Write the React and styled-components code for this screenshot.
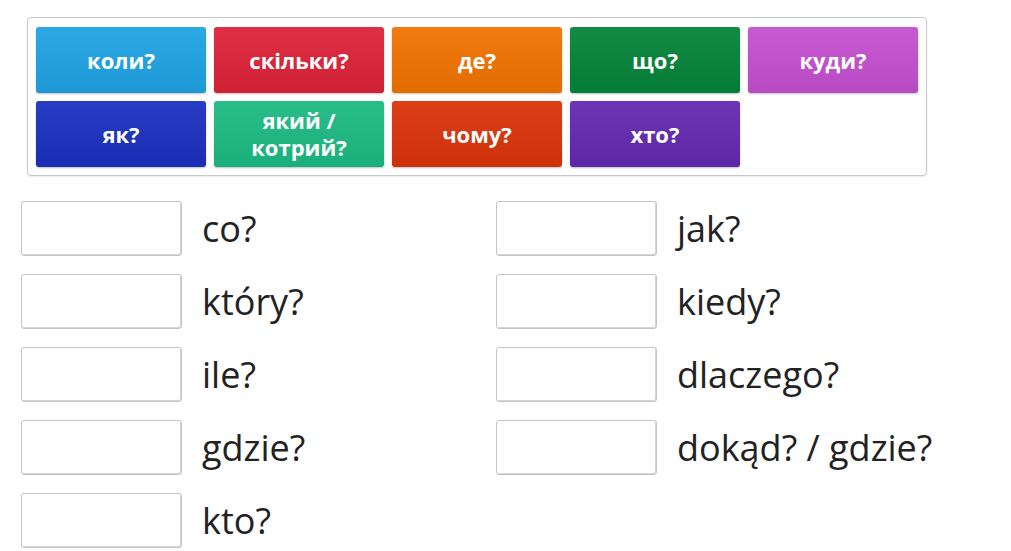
import styled, { createGlobalStyle } from "styled-components";

const GlobalStyle = createGlobalStyle`
    body {
        margin: 0;
        background: #fff;
        font-family: "Open Sans", "Noto Sans", sans-serif;
    }
`;

const tiles = [
    { text: "коли?", color: "#1ea3e3" },
    { text: "скільки?", color: "#dc2238" },
    { text: "де?", color: "#f07300" },
    { text: "що?", color: "#058338" },
    { text: "куди?", color: "#c44fd0" },
    { text: "як?", color: "#1b30c0" },
    { text: "який / котрий?", color: "#1cba82" },
    { text: "чому?", color: "#db330a" },
    { text: "хто?", color: "#6229b1" },
];

const leftWords = ["co?", "który?", "ile?", "gdzie?", "kto?"];
const rightWords = ["jak?", "kiedy?", "dlaczego?", "dokąd? / gdzie?"];

const App = () => {
    return (
        <>
            <GlobalStyle />
            <PageDiv>
                <TilePanel>
                    {tiles.map((t) => (
                        <Tile key={t.text} $color={t.color}>{t.text}</Tile>
                    ))}
                </TilePanel>
                <AnswerGrid>
                    <AnswerColumn>
                        {leftWords.map((w) => (
                            <AnswerRow key={w}>
                                <DropBox />
                                <WordLabel>{w}</WordLabel>
                            </AnswerRow>
                        ))}
                    </AnswerColumn>
                    <AnswerColumn>
                        {rightWords.map((w) => (
                            <AnswerRow key={w}>
                                <DropBox />
                                <WordLabel>{w}</WordLabel>
                            </AnswerRow>
                        ))}
                    </AnswerColumn>
                </AnswerGrid>
            </PageDiv>
        </>
    );
};

export default App;

const PageDiv = styled.div`
    padding: 17px 0 0 21px;
`;

const TilePanel = styled.div`
    margin-left: 6px;
    width: 882px;
    display: grid;
    grid-template-columns: repeat(5, 170px);
    grid-auto-rows: 66px;
    gap: 8px 8px;
    padding: 9px 8px 8px 8px;
    border: 1px solid #c9c9c9;
    border-radius: 4px;
    box-shadow: 0 1px 2px rgba(0, 0, 0, 0.08);
`;

const Tile = styled.div`
    display: flex;
    align-items: center;
    justify-content: center;
    text-align: center;
    padding: 0 40px;
    border-radius: 3px;
    background: ${(p) => p.$color};
    background-image: linear-gradient(rgba(255, 255, 255, 0.06), rgba(0, 0, 0, 0.06));
    box-shadow: 0 1px 2px rgba(0, 0, 0, 0.25);
    color: #fff;
    font-size: 22px;
    font-weight: 700;
    line-height: 27px;
`;

const AnswerGrid = styled.div`
    display: grid;
    grid-template-columns: 475px 475px;
    margin-top: 25px;
`;

const AnswerColumn = styled.div`
    display: flex;
    flex-direction: column;
    gap: 18px;
`;

const AnswerRow = styled.div`
    display: flex;
    align-items: center;
    gap: 20px;
    height: 55px;
`;

const DropBox = styled.div`
    box-sizing: border-box;
    width: 161px;
    height: 55px;
    border: 1px solid #c4c4c4;
    border-radius: 3px;
    box-shadow: inset -1px -1px 0 #d6d6d6;
    background: #fff;
`;

const WordLabel = styled.span`
    font-size: 36px;
    color: #222;
    line-height: 1;
`;
